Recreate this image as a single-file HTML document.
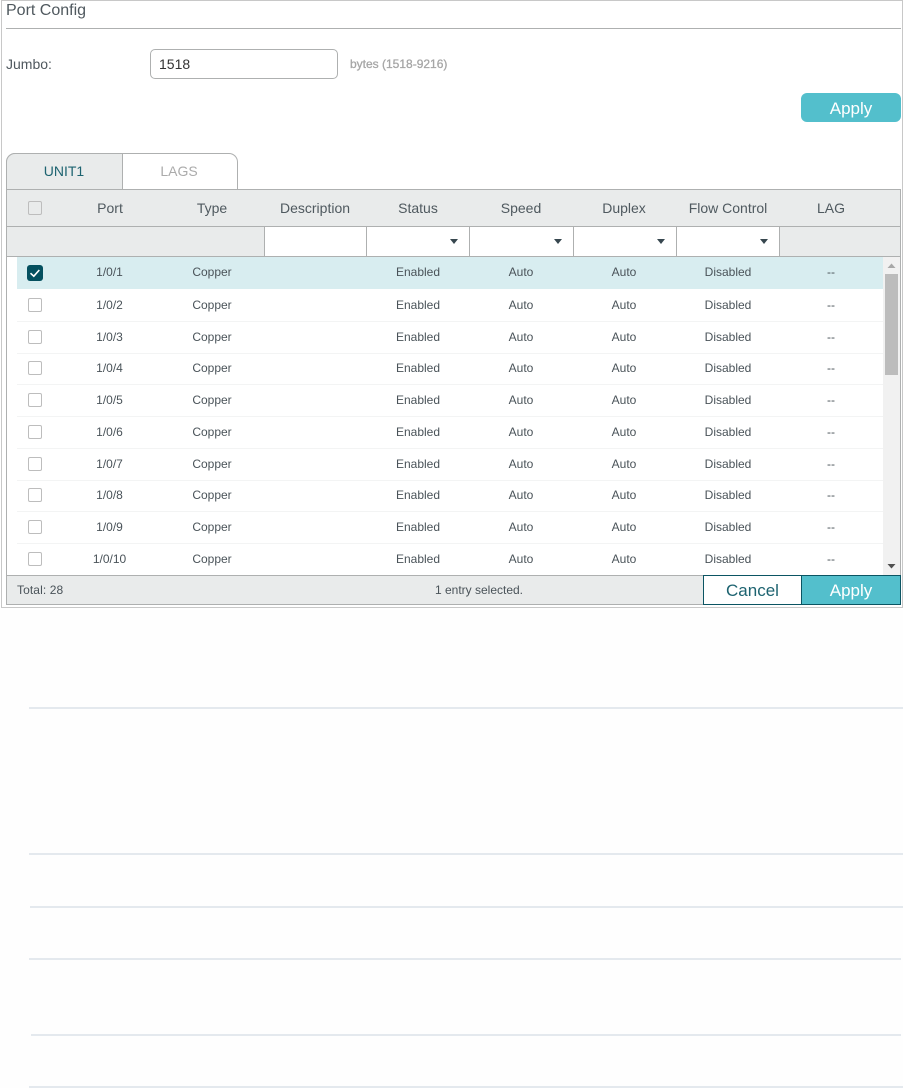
<!DOCTYPE html>
<html><head><meta charset="utf-8"><style>
html,body{margin:0;padding:0;background:#fff}
body{width:903px;height:1088px;position:relative;overflow:hidden;font-family:"Liberation Sans",Arial,sans-serif;color:#4a5359}
div{position:absolute;box-sizing:border-box}
.t{white-space:nowrap;text-align:center;transform:translateX(-50%)}
.h{font-size:14px;line-height:16px;top:200px;color:#4f595f}
.c{font-size:12px;line-height:14px;color:#4a5359}
.cb{width:14px;height:14px;left:28px;border:1px solid #bdbdbd;border-radius:2px;background:#fff}
.v{width:1px;top:227px;height:29px;background:#aeb0b0}
.sel{top:227px;height:29px;background:#fff}
.ar{top:239px;width:0;height:0;border-left:4.5px solid transparent;border-right:4.5px solid transparent;border-top:5px solid #37474f}
.l{height:2px;background:#e4e9ee}
.sep{left:17px;width:866px;height:1px;background:#f3f4f4}
</style></head><body>
<div style="left:0;top:610px;width:903px;height:478px;background:#fefefe"></div>
<div style="left:1px;top:0;width:902px;height:608px;border:1px solid #c8c8c8"></div>
<div style="left:6px;top:-1px;font-size:16px;line-height:24px;color:#4f585e">Port Config</div>
<div style="left:6px;top:28px;width:895px;height:1px;background:#aeb0b0"></div>
<div style="left:6px;top:56px;font-size:14px;line-height:16px;color:#4f585e">Jumbo:</div>
<div style="left:150px;top:49px;width:188px;height:30px;border:1px solid #aeb0b0;border-radius:5px;background:#fff"></div>
<div style="left:159px;top:56px;font-size:14px;line-height:16px;color:#333">1518</div>
<div style="left:350px;top:57px;font-size:12px;line-height:14px;color:#a6a6a6;-webkit-text-stroke:.3px #a6a6a6">bytes (1518-9216)</div>
<div style="left:801px;top:93px;width:100px;height:29px;background:#53bfcc;border-radius:6px;color:#fff;font-size:17px;line-height:31px;text-align:center">Apply</div>

<div style="left:6px;top:153px;width:232px;height:37px;border:1px solid #aeb0b0;border-bottom:0;border-radius:9px 9px 0 0;background:#fff"></div>
<div style="left:6px;top:153px;width:117px;height:37px;border:1px solid #aeb0b0;border-bottom:0;border-radius:9px 0 0 0;background:#e9ebeb"></div>
<div class="t" style="left:64px;top:163px;font-size:14px;line-height:16px;color:#1d6370">UNIT1</div>
<div class="t" style="left:179px;top:163px;font-size:14px;line-height:16px;color:#ababab">LAGS</div>

<div style="left:6px;top:189px;width:895px;height:416px;border:1px solid #aeb0b0;border-bottom:0"></div>
<div style="left:7px;top:190px;width:893px;height:66px;background:#e9ebeb"></div>
<div style="left:123px;top:189px;width:778px;height:1px;background:#aeb0b0"></div>
<div style="left:7px;top:226px;width:893px;height:1px;background:#aeb0b0"></div>
<div style="left:6px;top:256px;width:895px;height:1px;background:#aeb0b0"></div>
<div class="cb" style="top:201px;background:#e9ebeb"></div>
<div class="t h" style="left:110px">Port</div>
<div class="t h" style="left:212px">Type</div>
<div class="t h" style="left:315px">Description</div>
<div class="t h" style="left:418px">Status</div>
<div class="t h" style="left:521px">Speed</div>
<div class="t h" style="left:624px">Duplex</div>
<div class="t h" style="left:728px">Flow Control</div>
<div class="t h" style="left:831px">LAG</div>

<div class="sel" style="left:265px;width:514px"></div>
<div class="v" style="left:264px"></div><div class="v" style="left:366px"></div><div class="v" style="left:469px"></div><div class="v" style="left:573px"></div><div class="v" style="left:676px"></div><div class="v" style="left:779px"></div>
<div class="ar" style="left:450px"></div><div class="ar" style="left:554px"></div><div class="ar" style="left:657px"></div><div class="ar" style="left:760px"></div>

<div style="left:17px;top:257px;width:866px;height:32px;background:#d8edf0"></div>
<div class="sep" style="top:321px"></div><div class="sep" style="top:353px"></div><div class="sep" style="top:384px"></div><div class="sep" style="top:416px"></div><div class="sep" style="top:448px"></div><div class="sep" style="top:480px"></div><div class="sep" style="top:511px"></div><div class="sep" style="top:543px"></div>

<div style="left:27px;top:265px;width:16px;height:16px;background:#04505f;border-radius:3px"></div>
<svg style="position:absolute;left:27px;top:265px" width="16" height="16"><path d="M3.5 8.2 L6.8 11.2 L12.3 5" fill="none" stroke="#fff" stroke-width="1.6"/></svg>
<div class="t c" style="left:109.5px;top:265px">1/0/1</div><div class="t c" style="left:212px;top:265px">Copper</div><div class="t c" style="left:418px;top:265px">Enabled</div><div class="t c" style="left:521px;top:265px">Auto</div><div class="t c" style="left:624px;top:265px">Auto</div><div class="t c" style="left:728px;top:265px">Disabled</div><div class="t c" style="left:831px;top:265px">--</div>

<div class="cb" style="top:298px"></div><div class="t c" style="left:109.5px;top:298px">1/0/2</div><div class="t c" style="left:212px;top:298px">Copper</div><div class="t c" style="left:418px;top:298px">Enabled</div><div class="t c" style="left:521px;top:298px">Auto</div><div class="t c" style="left:624px;top:298px">Auto</div><div class="t c" style="left:728px;top:298px">Disabled</div><div class="t c" style="left:831px;top:298px">--</div>

<div class="cb" style="top:330px"></div><div class="t c" style="left:109.5px;top:330px">1/0/3</div><div class="t c" style="left:212px;top:330px">Copper</div><div class="t c" style="left:418px;top:330px">Enabled</div><div class="t c" style="left:521px;top:330px">Auto</div><div class="t c" style="left:624px;top:330px">Auto</div><div class="t c" style="left:728px;top:330px">Disabled</div><div class="t c" style="left:831px;top:330px">--</div>

<div class="cb" style="top:361px"></div><div class="t c" style="left:109.5px;top:361px">1/0/4</div><div class="t c" style="left:212px;top:361px">Copper</div><div class="t c" style="left:418px;top:361px">Enabled</div><div class="t c" style="left:521px;top:361px">Auto</div><div class="t c" style="left:624px;top:361px">Auto</div><div class="t c" style="left:728px;top:361px">Disabled</div><div class="t c" style="left:831px;top:361px">--</div>

<div class="cb" style="top:393px"></div><div class="t c" style="left:109.5px;top:393px">1/0/5</div><div class="t c" style="left:212px;top:393px">Copper</div><div class="t c" style="left:418px;top:393px">Enabled</div><div class="t c" style="left:521px;top:393px">Auto</div><div class="t c" style="left:624px;top:393px">Auto</div><div class="t c" style="left:728px;top:393px">Disabled</div><div class="t c" style="left:831px;top:393px">--</div>

<div class="cb" style="top:425px"></div><div class="t c" style="left:109.5px;top:425px">1/0/6</div><div class="t c" style="left:212px;top:425px">Copper</div><div class="t c" style="left:418px;top:425px">Enabled</div><div class="t c" style="left:521px;top:425px">Auto</div><div class="t c" style="left:624px;top:425px">Auto</div><div class="t c" style="left:728px;top:425px">Disabled</div><div class="t c" style="left:831px;top:425px">--</div>

<div class="cb" style="top:457px"></div><div class="t c" style="left:109.5px;top:457px">1/0/7</div><div class="t c" style="left:212px;top:457px">Copper</div><div class="t c" style="left:418px;top:457px">Enabled</div><div class="t c" style="left:521px;top:457px">Auto</div><div class="t c" style="left:624px;top:457px">Auto</div><div class="t c" style="left:728px;top:457px">Disabled</div><div class="t c" style="left:831px;top:457px">--</div>

<div class="cb" style="top:488px"></div><div class="t c" style="left:109.5px;top:488px">1/0/8</div><div class="t c" style="left:212px;top:488px">Copper</div><div class="t c" style="left:418px;top:488px">Enabled</div><div class="t c" style="left:521px;top:488px">Auto</div><div class="t c" style="left:624px;top:488px">Auto</div><div class="t c" style="left:728px;top:488px">Disabled</div><div class="t c" style="left:831px;top:488px">--</div>

<div class="cb" style="top:520px"></div><div class="t c" style="left:109.5px;top:520px">1/0/9</div><div class="t c" style="left:212px;top:520px">Copper</div><div class="t c" style="left:418px;top:520px">Enabled</div><div class="t c" style="left:521px;top:520px">Auto</div><div class="t c" style="left:624px;top:520px">Auto</div><div class="t c" style="left:728px;top:520px">Disabled</div><div class="t c" style="left:831px;top:520px">--</div>

<div class="cb" style="top:552px"></div><div class="t c" style="left:109.5px;top:552px">1/0/10</div><div class="t c" style="left:212px;top:552px">Copper</div><div class="t c" style="left:418px;top:552px">Enabled</div><div class="t c" style="left:521px;top:552px">Auto</div><div class="t c" style="left:624px;top:552px">Auto</div><div class="t c" style="left:728px;top:552px">Disabled</div><div class="t c" style="left:831px;top:552px">--</div>

<div style="left:883px;top:257px;width:17px;height:318px;background:#f1f1f1"></div>
<div style="left:885px;top:274px;width:13px;height:101px;background:#bcbcbc"></div>
<svg style="position:absolute;left:883px;top:257px" width="17" height="318"><path d="M4.5 11 L12.5 11 L8.5 6.5Z" fill="#a8a8a8"/><path d="M4.5 307 L12.5 307 L8.5 311.5Z" fill="#505050"/></svg>

<div style="left:6px;top:575px;width:895px;height:30px;background:#e9ebeb;border:1px solid #aeb0b0"></div>
<div style="left:17px;top:583px;font-size:12px;line-height:14px;letter-spacing:.1px">Total: 28</div>
<div class="t c" style="left:479px;top:583px">1 entry selected.</div>
<div style="left:703px;top:575px;width:99px;height:30px;background:#fff;border:1px solid #0b5563;color:#1d6370;font-size:17px;line-height:29px;text-align:center">Cancel</div>
<div style="left:801px;top:575px;width:100px;height:30px;background:#53bfcc;border:1px solid #0b5563;color:#fff;font-size:17px;line-height:29px;text-align:center">Apply</div>

<div class="l" style="left:29px;top:707px;width:874px"></div>
<div class="l" style="left:29px;top:853px;width:874px"></div>
<div class="l" style="left:30px;top:906px;width:873px"></div>
<div class="l" style="left:29px;top:958px;width:872px"></div>
<div class="l" style="left:31px;top:1034px;width:870px"></div>
<div class="l" style="left:29px;top:1086px;width:874px"></div>
</body></html>
